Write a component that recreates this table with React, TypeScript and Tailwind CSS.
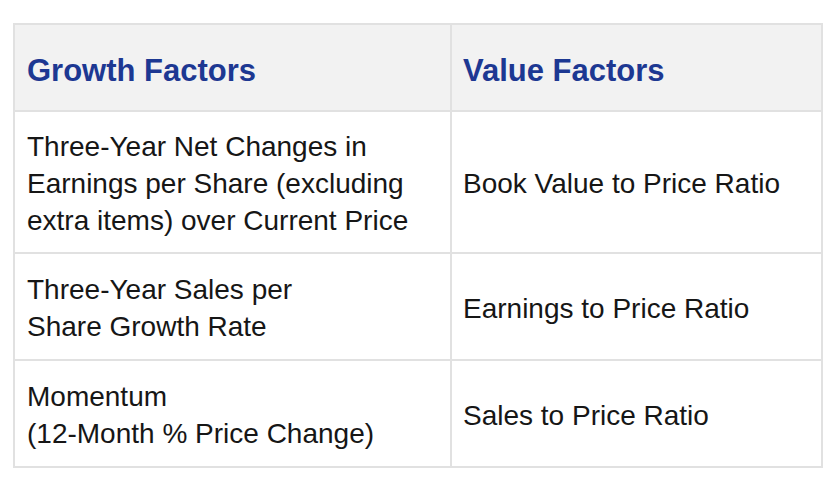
import React from 'react';

const rows = [
  {
    growth: ['Three-Year Net Changes in', 'Earnings per Share (excluding', 'extra items) over Current Price'],
    value: 'Book Value to Price Ratio',
    h: 'h-[142px]',
  },
  {
    growth: ['Three-Year Sales per', 'Share Growth Rate'],
    value: 'Earnings to Price Ratio',
    h: 'h-[107px]',
  },
  {
    growth: ['Momentum', '(12-Month % Price Change)'],
    value: 'Sales to Price Ratio',
    h: 'h-[107px]',
  },
];

const App = () => {
  return (
    <div className="w-[836px] h-[488px] bg-white pt-[23px] pl-[13px] font-['Liberation_Sans',Arial,sans-serif]">
      <table className="w-[808px] border-collapse table-fixed">
        <colgroup>
          <col className="w-[437px]" />
          <col className="w-[371px]" />
        </colgroup>
        <thead>
          {/* En-tête */}
          <tr className="h-[87px] bg-[#f2f2f2]">
            <th className="border-2 border-[#e1e1e1] pl-[12px] pr-[8px] pt-[6px] text-left align-middle text-[31px] leading-[1.15] font-bold text-[#1d3892]">
              Growth Factors
            </th>
            <th className="border-2 border-[#e1e1e1] pl-[11px] pr-[8px] pt-[6px] text-left align-middle text-[31px] leading-[1.15] font-bold text-[#1d3892]">
              Value Factors
            </th>
          </tr>
        </thead>
        <tbody>
          {rows.map((r, i) => (
            <tr key={i} className={r.h}>
              <td className="border-2 border-[#e1e1e1] pl-[12px] pr-[4px] pt-[5px] align-middle text-[28px] leading-[36.7px] text-[#161616]">
                {r.growth.map((line, j) => (
                  <div key={j} className="whitespace-nowrap">{line}</div>
                ))}
              </td>
              <td className="border-2 border-[#e1e1e1] pl-[11px] pr-[8px] pt-[5px] align-middle text-[28px] leading-[36.7px] text-[#161616]">
                {r.value}
              </td>
            </tr>
          ))}
        </tbody>
      </table>
    </div>
  );
};

export default App;
